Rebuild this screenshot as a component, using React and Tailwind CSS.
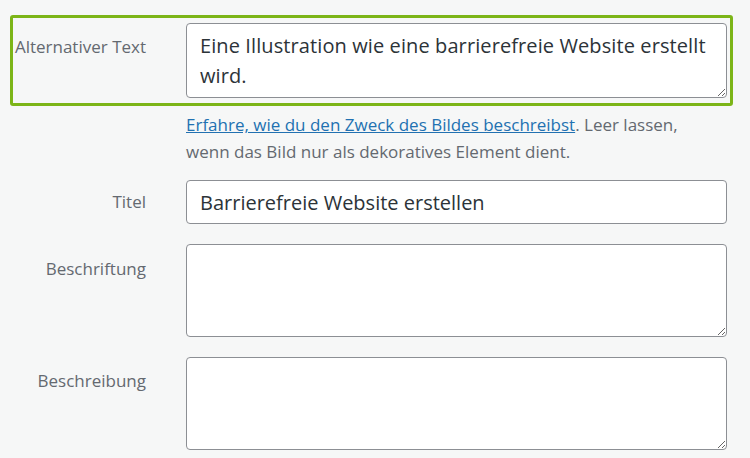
import React from "react";

const font = { fontFamily: '"Open Sans", "Noto Sans", Arial, sans-serif' };

function Label({ children, className = "" }) {
  return (
    <div className={`shrink-0 text-right text-[17px] leading-[22px] text-[#646970] ${className}`}>
      {children}
    </div>
  );
}

export default function App() {
  return (
    <div
      className="w-[750px] h-[458px] overflow-hidden bg-[#f6f7f7] pt-[15px]"
      style={font}
    >
      <div className="ml-[10px] w-[723px] border-[3px] border-[#7cb518] rounded-[3px] flex items-start pt-[5px] pb-[5px]">
        <Label className="w-[133px] mt-[13px]">Alternativer Text</Label>
        <textarea
          className="ml-[40px] w-[541px] h-[75px] bg-white border border-[#8c8f94] rounded-[4px] pl-[13px] pr-[8px] pt-[7px] text-[20px] leading-[30px] tracking-[0.1px] text-[#2c3338] outline-none"
          defaultValue="Eine Illustration wie eine barrierefreie Website erstellt wird."
        />
      </div>
      <p className="ml-[186px] mt-[5px] w-[505px] text-[17px] leading-[27px] text-[#646970]">
        <a className="text-[#2271b1] underline" href="#">
          Erfahre, wie du den Zweck des Bildes beschreibst
        </a>
        . Leer lassen, wenn das Bild nur als dekoratives Element dient.
      </p>
      <div className="mt-[15px] flex items-center">
        <Label className="w-[146px]">Titel</Label>
        <input
          className="ml-[40px] w-[541px] h-[44px] bg-white border border-[#8c8f94] rounded-[4px] px-[13px] text-[20px] text-[#2c3338] outline-none"
          defaultValue="Barrierefreie Website erstellen"
        />
      </div>
      <div className="mt-[20px] flex items-start">
        <Label className="w-[146px] mt-[14px]">Beschriftung</Label>
        <textarea className="ml-[40px] w-[541px] h-[93px] bg-white border border-[#8c8f94] rounded-[4px] outline-none" />
      </div>
      <div className="mt-[20px] flex items-start">
        <Label className="w-[146px] mt-[13px]">Beschreibung</Label>
        <textarea className="ml-[40px] w-[541px] h-[93px] bg-white border border-[#8c8f94] rounded-[4px] outline-none" />
      </div>
    </div>
  );
}
